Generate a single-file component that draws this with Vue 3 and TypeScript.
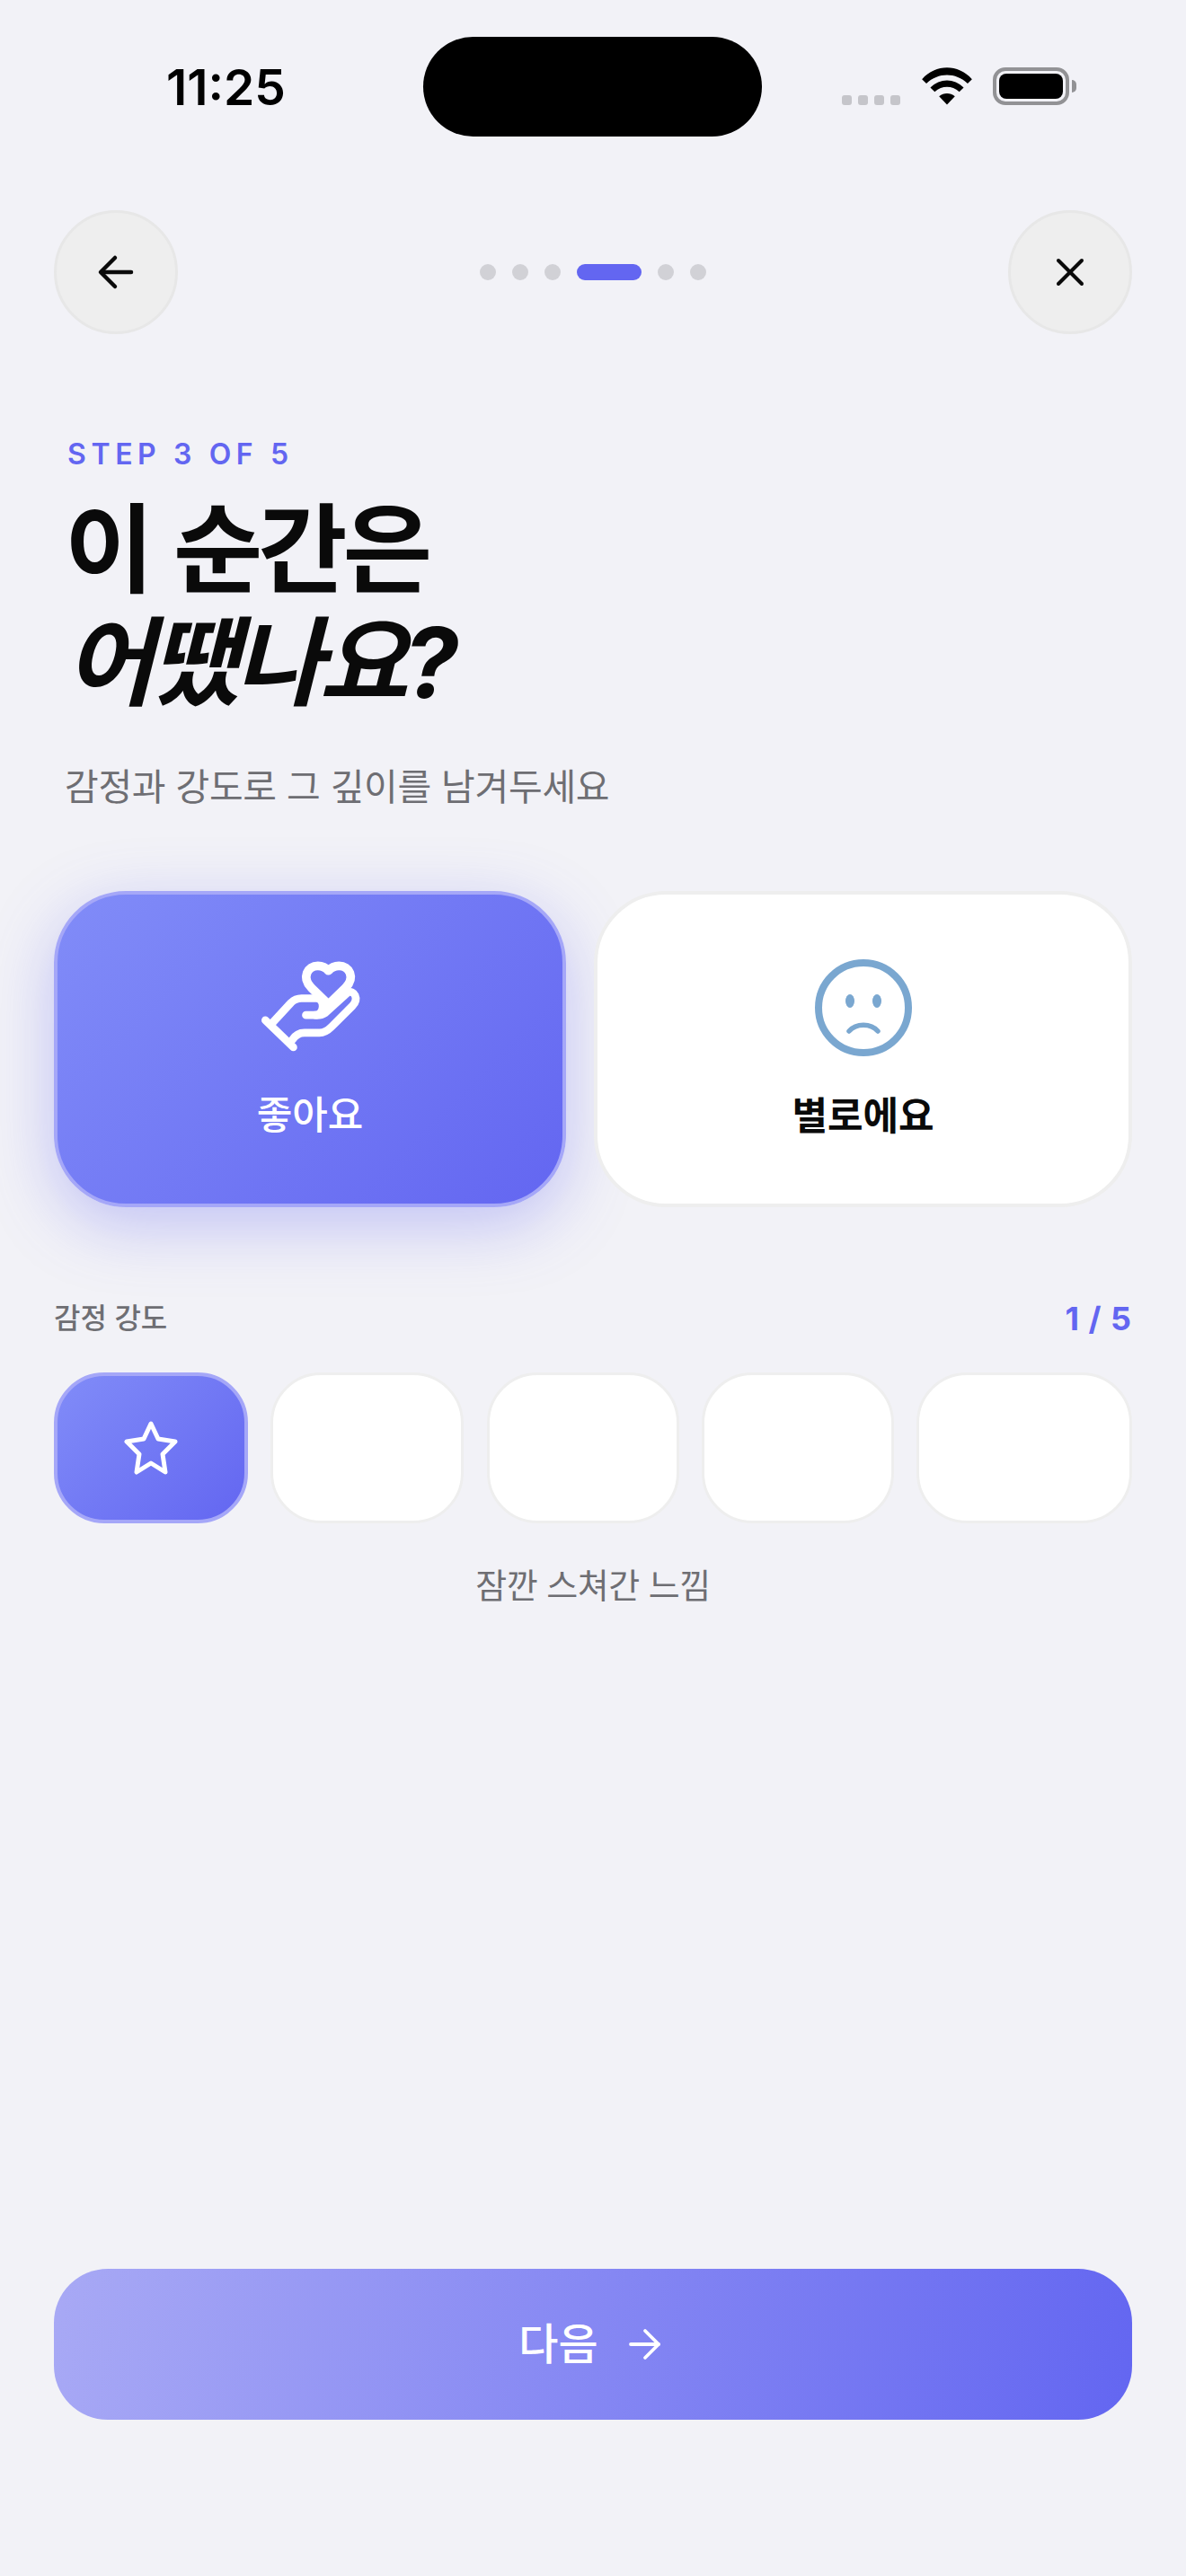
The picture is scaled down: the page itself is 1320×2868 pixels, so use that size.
<script setup lang="ts">
const leftDots = [0, 1, 2]
const rightDots = [0, 1]
const signalBars = [0, 1, 2, 3]
const emptyTiles = [2, 3, 4, 5]
</script>

<template>
  <div class="screen">
    <header class="status">
      <span class="clock">11:25</span>
      <div class="island"></div>
      <div class="status-right">
        <div class="signal">
          <i v-for="n in signalBars" :key="n"></i>
        </div>
        <svg class="wifi" width="58" height="42" viewBox="0 0 58 43">
          <path d="M0.5 13.5C16.5 -4 41.5 -4 57.5 13.5L52.5 18.5C39 5.5 19 5.5 5.500 18.500Z" fill="#000" />
          <path d="M10 23C21 12 37 12 48 23L43 28C34.500 20.500 23.500 20.500 15 28Z" fill="#000" />
          <path d="M20 33C25.500 28.500 32.500 28.500 38 33L29 42.500Z" fill="#000" />
        </svg>
        <div class="battery">
          <div class="battery-fill"></div>
          <div class="battery-cap"></div>
        </div>
      </div>
    </header>

    <nav class="topbar">
      <button class="round-btn">
        <svg width="44" height="44" viewBox="0 0 44 44" fill="none" stroke="#0a0a0a" stroke-width="4.500" stroke-linecap="round" stroke-linejoin="round">
          <path d="M39 22H6" />
          <path d="M21 6L5 22L21 38" />
        </svg>
      </button>
      <div class="dots">
        <i v-for="n in leftDots" :key="'l' + n" class="dot"></i>
        <i class="dot active"></i>
        <i v-for="n in rightDots" :key="'r' + n" class="dot"></i>
      </div>
      <button class="round-btn">
        <svg width="36" height="36" viewBox="0 0 36 36" fill="none" stroke="#0a0a0a" stroke-width="4" stroke-linecap="round">
          <path d="M5 5L31 31" />
          <path d="M31 5L5 31" />
        </svg>
      </button>
    </nav>

    <section class="heading">
      <p class="step">STEP 3 OF 5</p>
      <h1 class="title">이 순간은<br /><em>어땠나요?</em></h1>
      <p class="sub">감정과 강도로 그 깊이를 남겨두세요</p>
    </section>

    <section class="choices">
      <button class="choice good">
        <svg width="117" height="107" viewBox="140 90 350 320" fill="none" stroke="#fff" stroke-width="26" stroke-linecap="round" stroke-linejoin="round">
          <path d="M165 293L258 383" />
          <path d="M190 300L250 235Q265 220 285 220H335C365 222 362 275 330 276H300" />
          <path d="M255 358Q270 335 295 335H345Q365 335 385 315L455 245C478 220 460 192 440 200L365 268Q350 278 330 276" />
          <path d="M375 240L318 185C285 150 305 112 340 112C358 112 368 120 375 128C382 120 392 112 410 112C445 112 465 150 432 185Z" stroke-width="29" />
        </svg>
        <span>좋아요</span>
      </button>
      <button class="choice bad">
        <svg width="108" height="108" viewBox="0 0 108 108" fill="none" stroke="#7aa7d0" stroke-linecap="round">
          <circle cx="54" cy="54" r="50" stroke-width="8" />
          <ellipse cx="39" cy="46.500" rx="5" ry="7.500" fill="#7aa7d0" stroke="none" />
          <ellipse cx="69" cy="46.500" rx="5" ry="7.500" fill="#7aa7d0" stroke="none" />
          <path d="M38 80C46 71 62 71 70 80" stroke-width="5.500" />
        </svg>
        <span>별로에요</span>
      </button>
    </section>

    <section class="intensity">
      <div class="intensity-head">
        <span class="intensity-label">감정 강도</span>
        <span class="intensity-value">1 / 5</span>
      </div>
      <div class="tiles">
        <button class="tile on">
          <svg width="62" height="60" viewBox="0 0 62 60" fill="none" stroke="#fff" stroke-width="5" stroke-linejoin="round">
            <path d="M31 3L39 20L58 23L44 37L47 57L31 47L15 57L18 37L4 23L23 20Z" />
          </svg>
        </button>
        <button v-for="n in emptyTiles" :key="n" class="tile"></button>
      </div>
      <p class="caption">잠깐 스쳐간 느낌</p>
    </section>

    <button class="next">
      <span>다음</span>
      <svg width="36" height="36" viewBox="0 0 36 36" fill="none" stroke="#fff" stroke-width="3.800" stroke-linecap="round" stroke-linejoin="round">
        <path d="M2 18H33" />
        <path d="M18 3L33 18L18 33" />
      </svg>
    </button>
  </div>
</template>

<style scoped>
.screen {
  position: relative;
  width: 1320px;
  height: 2868px;
  background: #f2f2f7;
  font-family: Inter, "Noto Sans CJK KR", sans-serif;
  overflow: hidden;
}

button {
  font-family: inherit;
  padding: 0;
  cursor: pointer;
}

.status {
  height: 234px;
  box-sizing: border-box;
  padding: 66px 0 0 185px;
  display: flex;
  align-items: flex-start;
  justify-content: space-between;
}

.clock {
  font-size: 55px;
  line-height: 62px;
  font-weight: 600;
  color: #000;
  letter-spacing: 0;
}

.island {
  position: absolute;
  left: 471px;
  top: 41px;
  width: 377px;
  height: 111px;
  border-radius: 56px;
  background: #000;
}

.status-right {
  display: flex;
  align-items: flex-end;
  margin-top: 9px;
  margin-right: 130px;
}

.signal {
  display: flex;
  gap: 7px;
  margin-right: 23px;
}

.signal i {
  width: 11px;
  height: 11px;
  border-radius: 3px;
  background: #c5c5ca;
}

.wifi {
  margin-right: 22px;
}

.battery {
  position: relative;
  width: 85px;
  height: 42px;
  box-sizing: border-box;
  border: 4px solid #929295;
  border-radius: 14px;
  padding: 3px;
}

.battery-fill {
  height: 100%;
  background: #000;
  border-radius: 8px;
}

.battery-cap {
  position: absolute;
  right: -12px;
  top: 10px;
  width: 5px;
  height: 14px;
  background: #929295;
  border-radius: 0 5px 5px 0;
}

.topbar {
  height: 138px;
  padding: 0 60px;
  display: flex;
  align-items: center;
  justify-content: space-between;
}

.round-btn {
  width: 138px;
  height: 138px;
  box-sizing: border-box;
  border-radius: 50%;
  border: 3px solid #e7e7e7;
  background: #eeeeee;
  display: flex;
  align-items: center;
  justify-content: center;
}

.dots {
  display: flex;
  gap: 18px;
}

.dot {
  width: 18px;
  height: 18px;
  border-radius: 9px;
  background: #d1d1d6;
}

.dot.active {
  width: 72px;
  background: #6366f1;
}

.heading {
  padding: 114px 0 0 72px;
}

.step {
  margin: 0 0 0 3px;
  font-size: 32px;
  line-height: 40px;
  font-weight: 600;
  letter-spacing: 5.6px;
  color: #6366f1;
}

.title {
  margin: 23px 0 0;
  font-size: 108px;
  line-height: 126px;
  font-weight: 700;
  letter-spacing: -5px;
  word-spacing: 6px;
  color: #0a0a0a;
}

.title em {
  font-style: italic;
}

.sub {
  margin: 49px 0 0;
  font-size: 41px;
  line-height: 52px;
  font-weight: 400;
  letter-spacing: -0.3px;
  color: #6e6e73;
}

.choices {
  margin: 90px 60px 0;
  display: grid;
  grid-template-columns: 570px 599px;
  gap: 31px;
}

.choice {
  height: 352px;
  box-sizing: border-box;
  border-radius: 80px;
  display: flex;
  flex-direction: column;
  align-items: center;
  padding-top: 72px;
  font-size: 43px;
  line-height: 56px;
}

.choice span {
  margin-top: 38px;
}

.good {
  border: 4px solid #a5a7f8;
  background: linear-gradient(135deg, #818cf8, #6366f1);
  color: #fff;
  font-weight: 500;
  box-shadow: 0 20px 72px rgba(99, 102, 241, 0.35);
}

.bad {
  border: 4px solid #eeeeee;
  background: #fff;
  color: #0a0a0a;
  font-weight: 700;
}

.intensity {
  margin: 100px 60px 0;
}

.intensity-head {
  display: flex;
  align-items: center;
  justify-content: space-between;
  height: 44px;
}

.intensity-label {
  font-size: 32px;
  font-weight: 500;
  color: #6e6e73;
  margin-bottom: 3px;
}

.intensity-value {
  font-size: 36px;
  font-weight: 700;
  letter-spacing: 1px;
  color: #6366f1;
  margin-top: 3px;
}

.tiles {
  margin-top: 40px;
  display: grid;
  grid-template-columns: 216px 215px 214px 214px 240px;
  justify-content: space-between;
}

.tile {
  height: 168px;
  box-sizing: border-box;
  border-radius: 56px;
  border: 3px solid #eeeeee;
  background: #fff;
  display: flex;
  align-items: center;
  justify-content: center;
}

.tile.on {
  border: 4px solid #a5a7f8;
  background: linear-gradient(135deg, #818cf8, #6366f1);
}

.caption {
  margin: 44px 0 0;
  text-align: center;
  font-size: 38px;
  line-height: 50px;
  letter-spacing: -0.5px;
  color: #6e6e73;
}

.next {
  position: absolute;
  left: 60px;
  bottom: 174px;
  width: 1200px;
  height: 168px;
  border: 0;
  border-radius: 60px;
  padding-right: 7px;
  background: linear-gradient(100deg, #a8a9f5, #6366f1);
  color: #fff;
  font-size: 48px;
  font-weight: 500;
  display: flex;
  align-items: center;
  justify-content: center;
  gap: 34px;
}

.next span {
  margin-bottom: 8px;
}
</style>

<style>
html,
body {
  margin: 0;
  background: #f2f2f7;
}
</style>
